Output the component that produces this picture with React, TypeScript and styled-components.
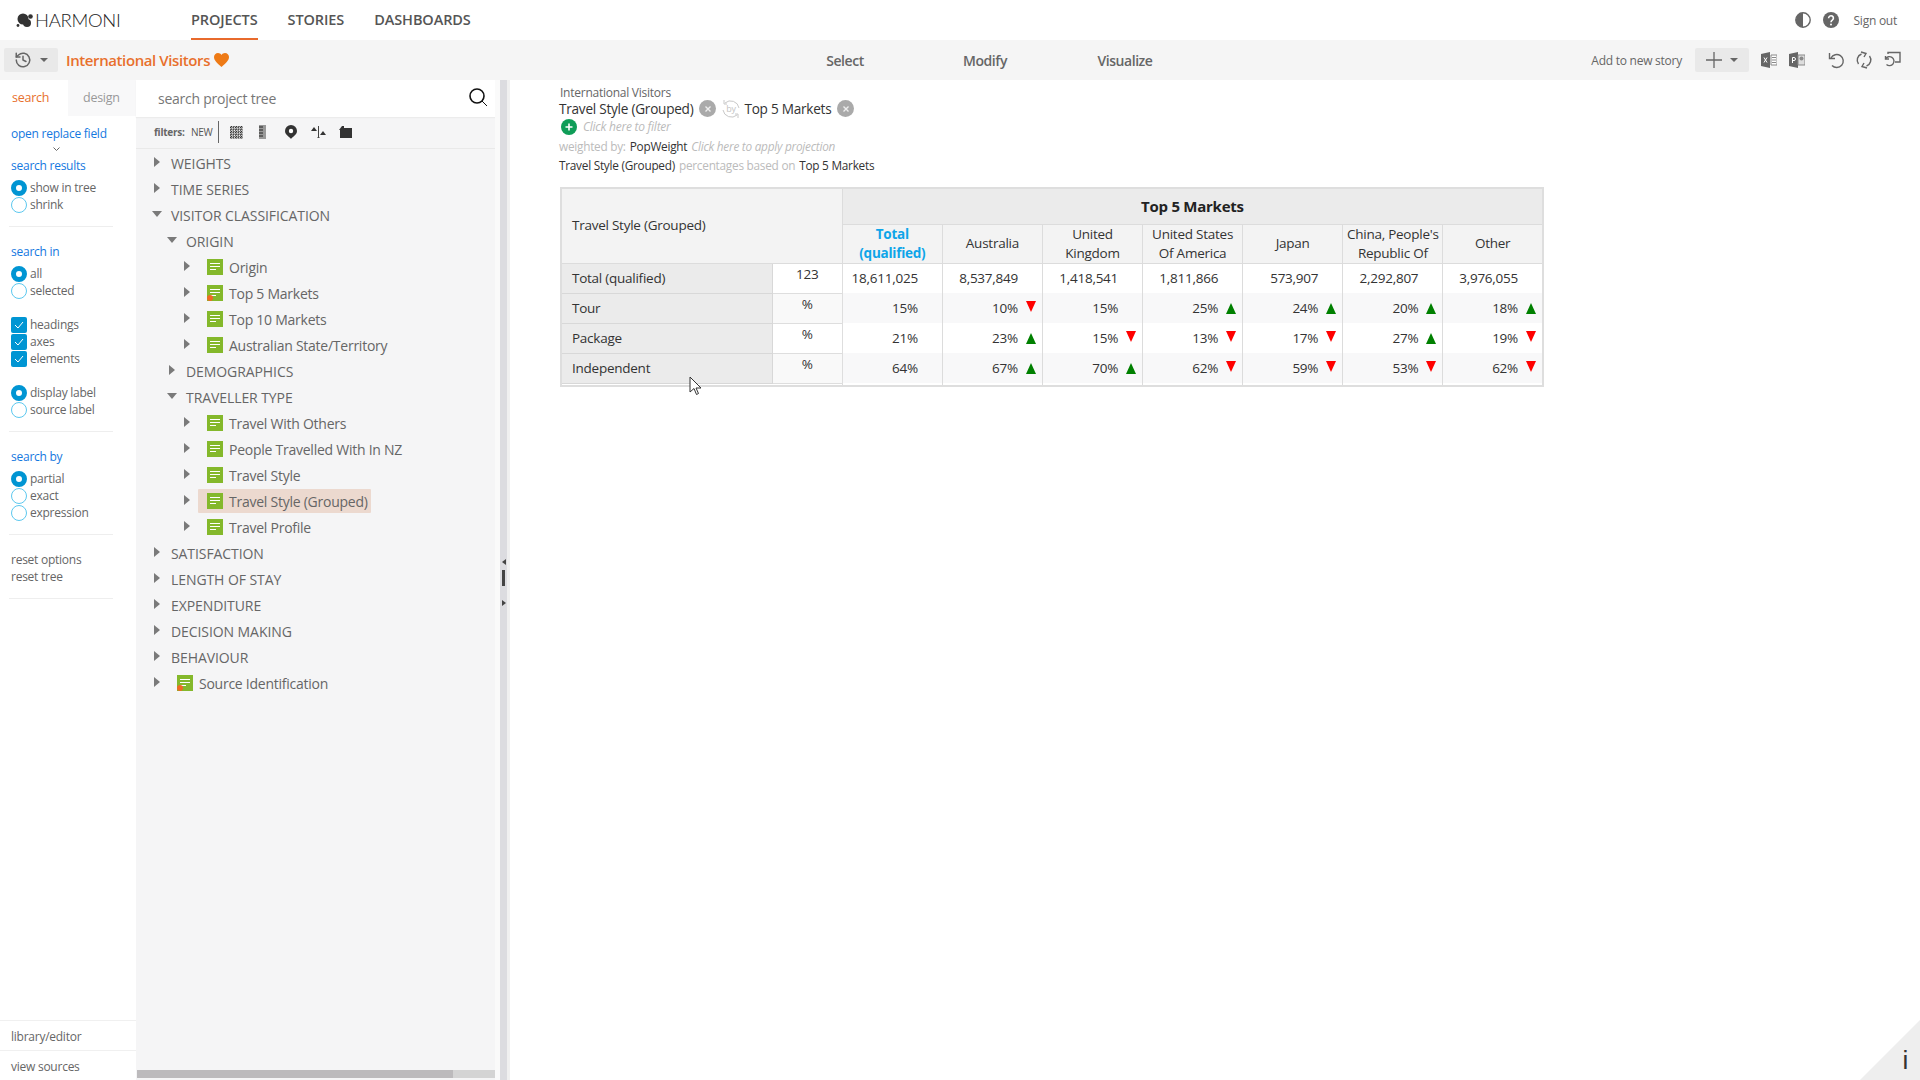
import React from "react";
import styled, { createGlobalStyle } from "styled-components";

const Global = createGlobalStyle`
  html, body { margin: 0; padding: 0; background: #fff; }
  body { font-family: "Open Sans", "Noto Sans", sans-serif; color: #333; letter-spacing: -0.25px; }
  * { box-sizing: border-box; }
`;

const Page = styled.div`
  position: relative;
  width: 1920px;
  height: 1080px;
  overflow: hidden;
  display: flex;
  flex-direction: column;
`;

/* header */
const Header = styled.header`
  height: 40px;
  display: flex;
  align-items: stretch;
  padding-left: 16px;
  padding-right: 23px;
  background: #fff;
`;
const Logo = styled.div`
  width: 175px;
  display: flex;
  align-items: center;
  gap: 2px;
`;
const LogoText = styled.span`
  font-family: Lato, sans-serif;
  font-weight: 300;
  font-size: 18.5px;
  letter-spacing: -0.3px;
  color: #222;
`;
const Nav = styled.nav`
  display: flex;
  gap: 30px;
`;
const NavItem = styled.a<{ $active?: boolean }>`
  display: flex;
  align-items: center;
  height: 40px;
  font-size: 14.5px;
  font-weight: 600;
  letter-spacing: -0.1px;
  color: #555;
  border-bottom: 2px solid ${(p) => (p.$active ? "#e86a2c" : "transparent")};
`;
const HeaderRight = styled.div`
  margin-left: auto;
  display: flex;
  align-items: center;
  gap: 12px;
`;
const SignOut = styled.span`
  font-size: 12px;
  color: #666;
  margin-left: 3px;
`;

/* toolbar */
const Toolbar = styled.div`
  height: 40px;
  display: grid;
  grid-template-columns: 811px 340px 1fr;
  align-items: center;
  background: #f5f5f5;
  padding: 0 19px 0 4px;
`;
const ToolLeft = styled.div`
  display: flex;
  align-items: center;
  gap: 8px;
`;
const DropButton = styled.div<{ $w: number }>`
  width: ${(p) => p.$w}px;
  height: 24px;
  border-radius: 2px;
  background: #e9e9e9;
  display: flex;
  align-items: center;
  justify-content: center;
  gap: 8px;
`;
const Caret = styled.span`
  width: 0;
  height: 0;
  border-left: 4px solid transparent;
  border-right: 4px solid transparent;
  border-top: 4px solid #666;
`;
const Title = styled.span`
  font-size: 15px;
  font-weight: 600;
  letter-spacing: -0.4px;
  color: #e8702c;
  display: flex;
  align-items: center;
  gap: 4px;
`;
const ToolTabs = styled.div`
  display: flex;
  justify-content: space-between;
`;
const ToolTab = styled.span`
  width: 60px;
  text-align: center;
  font-size: 14px;
  font-weight: 600;
  letter-spacing: -0.45px;
  color: #666;
`;
const ToolRight = styled.div`
  display: flex;
  align-items: center;
  justify-content: flex-end;
`;
const AddLabel = styled.span`
  font-size: 12px;
  color: #666;
  margin-right: 13px;
`;
const IconGroup = styled.div<{ $gap: number; $ml: number }>`
  display: flex;
  align-items: center;
  gap: ${(p) => p.$gap}px;
  margin-left: ${(p) => p.$ml}px;
`;

/* body */
const Body = styled.div`
  flex: 1;
  display: flex;
  min-height: 0;
`;
const LeftNav = styled.aside`
  width: 136px;
  display: flex;
  flex-direction: column;
  background: #fff;
`;
const Tabs = styled.div`
  height: 36px;
  display: flex;
`;
const Tab = styled.div<{ $active?: boolean }>`
  width: 68px;
  font-size: 12.5px;
  line-height: 35px;
  padding-left: ${(p) => (p.$active ? 12 : 15)}px;
  color: ${(p) => (p.$active ? "#e8702c" : "#999")};
  background: ${(p) => (p.$active ? "#fff" : "#f8f8f9")};
`;
const Options = styled.div`
  flex: 1;
  padding: 9px 23px 0 11px;
`;
const Section = styled.section`
  border-bottom: 1px solid #eee;
  margin-left: -2px;
  padding: 0 0 13px 2px;
  margin-bottom: 16px;
`;
const BlueLink = styled.div`
  font-size: 12px;
  line-height: 17px;
  color: #1478e0;
`;
const BlueHead = styled(BlueLink)`
  margin-bottom: 5px;
`;
const Chevron = styled.div`
  height: 15px;
  padding-left: 42px;
  display: flex;
  align-items: center;
`;
const OptionRow = styled.label`
  height: 17px;
  display: flex;
  align-items: center;
  gap: 3px;
  font-size: 12px;
  color: #666;
  white-space: nowrap;
`;
const Radio = styled.span<{ $on?: boolean }>`
  width: 16px;
  height: 16px;
  flex: none;
  border-radius: 50%;
  background: #fff;
  border: ${(p) => (p.$on ? "5px solid #0095d3" : "1px solid #5cc8ef")};
`;
const Check = styled.span`
  width: 16px;
  height: 16px;
  flex: none;
  border-radius: 2px;
  background: #0095d3;
  display: flex;
  align-items: center;
  justify-content: center;
`;
const Gap = styled.div<{ $h: number }>`
  height: ${(p) => p.$h}px;
`;
const GreyLink = styled.div`
  font-size: 12px;
  line-height: 17px;
  color: #666;
`;
const FootLink = styled.div`
  height: 30px;
  border-top: 1px solid #f0f0f0;
  padding: 1px 0 0 11px;
  font-size: 12px;
  line-height: 30px;
  color: #666;
`;
const TreePanel = styled.div`
  position: relative;
  width: 359px;
  background: #f5f5f6;
  display: flex;
  flex-direction: column;
`;
const SearchBox = styled.div`
  height: 37px;
  background: #fff;
  display: flex;
  align-items: center;
  justify-content: space-between;
  padding: 0 7px 0 22px;
  font-size: 14px;
  color: #777;
  box-shadow: 0 1px 1px #ececec;
`;
const SearchGlyph = styled.svg`
  margin-top: -4px;
`;
const FilterBar = styled.div`
  height: 32px;
  display: flex;
  align-items: center;
  padding: 0 0 1px 18px;
  border-bottom: 1px solid #e9e9e9;
  font-size: 10px;
`;
const FilterLabel = styled.b`
  font-weight: 700;
  color: #666;
  width: 37px;
`;
const FilterNew = styled.span`
  color: #555;
  width: 28px;
  height: 22px;
  line-height: 22px;
  border-right: 1px solid #666;
`;
const FilterIcons = styled.div`
  display: flex;
  align-items: center;
  margin-left: 11px;
`;
const FilterIcon = styled.span<{ $w: number }>`
  width: ${(p) => p.$w}px;
  display: flex;
`;
const Tree = styled.div`
  padding-top: 1px;
  flex: 1;
`;
const TreeRow = styled.div<{ $level: number }>`
  height: 26px;
  display: flex;
  align-items: center;
  padding-left: ${(p) => 18 + p.$level * 15}px;
  font-size: 14px;
  color: #666;
  white-space: nowrap;
`;
const GroupName = styled.span`
  letter-spacing: -0.08px;
`;
const ArrowSlot = styled.span<{ $w: number }>`
  width: ${(p) => p.$w}px;
  flex: none;
  display: flex;
  align-items: center;
`;
const ArrowRight = styled.span`
  width: 0;
  height: 0;
  border-top: 5px solid transparent;
  border-bottom: 5px solid transparent;
  border-left: 6px solid #7a7a7a;
  margin-top: -2px;
`;
const ArrowDown = styled.span`
  width: 0;
  height: 0;
  border-left: 5px solid transparent;
  border-right: 5px solid transparent;
  border-top: 6px solid #7a7a7a;
  margin-left: -2px;
  margin-top: -3px;
`;
const ItemLabel = styled.span<{ $sel?: boolean }>`
  height: 24px;
  display: flex;
  align-items: center;
  gap: 6px;
  padding: 0 3px 0 9px;
  background: ${(p) => (p.$sel ? "#ecd9cf" : "transparent")};
  border-radius: 1px;
`;
const HScroll = styled.div`
  height: 8px;
  margin: 0 0 2px 1px;
  background: #d4d4d4;
`;
const HThumb = styled.div`
  width: 316px;
  height: 100%;
  background: #bcbabc;
`;
const Splitter = styled.div`
  position: relative;
  width: 15px;
  background: linear-gradient(to right, #fafafa 0 5px, #dcdce0 5px 12px, #f0f0f0 12px 15px);
`;
const SplitBar = styled.span`
  position: absolute;
  left: 7px;
  top: 490px;
  width: 3px;
  height: 16px;
  background: #444;
`;
const SplitTop = styled.span`
  position: absolute;
  left: 7px;
  top: 479px;
  border-top: 3px solid transparent;
  border-bottom: 3px solid transparent;
  border-right: 4px solid #444;
`;
const SplitBottom = styled.span`
  position: absolute;
  left: 7px;
  top: 520px;
  border-top: 3px solid transparent;
  border-bottom: 3px solid transparent;
  border-left: 4px solid #444;
`;

/* main */
const Main = styled.main`
  flex: 1;
  padding: 5px 0 0 50px;
  background: #fff;
`;
const Crumb = styled.div`
  font-size: 12px;
  line-height: 15px;
  color: #666;
`;
const ChipRow = styled.div`
  height: 17px;
  margin-left: -1px;
  display: flex;
  align-items: center;
  font-size: 13.6px;
  color: #333;
`;
const ChipClose = styled.span<{ $ml: number }>`
  width: 17px;
  height: 17px;
  flex: none;
  margin-left: ${(p) => p.$ml}px;
  border-radius: 50%;
  background: #aaa;
  color: #eee;
  display: flex;
  align-items: center;
  justify-content: center;
`;
const ByBadge = styled.svg`
  flex: none;
  margin: 0 3px 0 5px;
`;
const ByText = styled.text`
  font-size: 9px;
  fill: #c4c4c4;
`;
const FilterRow = styled.div`
  height: 19px;
  display: flex;
  align-items: center;
  gap: 6px;
  margin-left: 1px;
  font-size: 12px;
  font-style: italic;
  color: #bbb;
`;
const Meta = styled.div`
  height: 19px;
  margin-left: -1px;
  display: flex;
  align-items: center;
  gap: 4px;
  font-size: 11.8px;
  color: #bbb;
`;
const MetaDark = styled.span`
  color: #333;
`;
const MetaItalic = styled.span`
  font-style: italic;
`;
const Pivot = styled.table`
  margin-top: 13px;
  table-layout: fixed;
  width: 984px;
  border-collapse: collapse;
  border: 2px solid #dedede;
  font-size: 13.5px;
  color: #333;
`;
const HeadCell = styled.th<{ $h: number; $dark?: boolean; $blue?: boolean; $big?: boolean; $left?: boolean }>`
  height: ${(p) => p.$h}px;
  padding: ${(p) => (p.$left ? "0 0 0 10px" : "0")};
  text-align: ${(p) => (p.$left ? "left" : "center")};
  font-weight: ${(p) => (p.$blue || p.$big ? 700 : 400)};
  font-size: ${(p) => (p.$big ? "15px" : "13.5px")};
  line-height: 19px;
  color: ${(p) => (p.$blue ? "#0ea5e9" : p.$big ? "#222" : "#333")};
  background: ${(p) => (p.$dark ? "#ebebeb" : "#f3f3f3")};
  border: 1px solid #dcdcdc;
`;
const RowLabel = styled.td`
  height: 30px;
  padding: 0 0 0 10px;
  background: #ebebeb;
  border: 1px solid #d8d8d8;
  border-left: 0;
`;
const UnitCell = styled.td<{ $alt?: boolean }>`
  padding: 0 0 8px;
  text-align: center;
  background: ${(p) => (p.$alt ? "#f9f9f9" : "#fff")};
  border: 1px solid #dedede;
`;
const DataCell = styled.td<{ $alt?: boolean }>`
  padding: 0;
  background: ${(p) => (p.$alt ? "#f8f8f9" : "#fff")};
  border-left: 1px solid #dcdcdc;
  border-right: 1px solid #dcdcdc;
`;
const CellInner = styled.div`
  display: flex;
  justify-content: flex-end;
  align-items: center;
`;
const ArrowBox = styled.span`
  width: 24px;
  flex: none;
  display: flex;
  justify-content: flex-end;
  padding-right: 6px;
`;
const Up = styled.span`
  border-left: 5px solid transparent;
  border-right: 5px solid transparent;
  border-bottom: 11px solid #008000;
`;
const Down = styled.span`
  border-left: 5px solid transparent;
  border-right: 5px solid transparent;
  border-top: 11px solid #ff0000;
  margin-top: -4px;
`;
const Spacer = styled.td`
  height: 3px;
  padding: 0;
  border-left: 1px solid #dcdcdc;
`;
const InfoCorner = styled.div`
  position: absolute;
  right: 0;
  bottom: 0;
  width: 60px;
  height: 60px;
  background: #eeeeee;
  clip-path: polygon(100% 0, 100% 100%, 0 100%);
`;
const InfoMark = styled.span`
  position: absolute;
  right: 12px;
  bottom: 7px;
  font-family: "Liberation Sans", sans-serif;
  font-size: 26px;
  line-height: 26px;
  color: #333;
`;
const Pointer = styled.svg`
  position: absolute;
  left: 689px;
  top: 376px;
`;

const DocIcon = ({ mark }: { mark?: boolean }) => (
  <svg width="16" height="16" viewBox="0 0 16 16">
    <rect width="16" height="16" fill="#84b82b" />
    <path d="M3 4h10v1H3zM3 7h10v1H3zM3 10h6v1H3z" fill="#fff" />
    {mark && <circle cx="3" cy="13" r="3" fill="#ef6a22" />}
  </svg>
);

const tree: { l: number; t: string; kind: "g" | "o" | "i" | "m" | "s" }[] = [
  { l: 0, t: "WEIGHTS", kind: "g" },
  { l: 0, t: "TIME SERIES", kind: "g" },
  { l: 0, t: "VISITOR CLASSIFICATION", kind: "o" },
  { l: 1, t: "ORIGIN", kind: "o" },
  { l: 2, t: "Origin", kind: "i" },
  { l: 2, t: "Top 5 Markets", kind: "m" },
  { l: 2, t: "Top 10 Markets", kind: "i" },
  { l: 2, t: "Australian State/Territory", kind: "i" },
  { l: 1, t: "DEMOGRAPHICS", kind: "g" },
  { l: 1, t: "TRAVELLER TYPE", kind: "o" },
  { l: 2, t: "Travel With Others", kind: "i" },
  { l: 2, t: "People Travelled With In NZ", kind: "i" },
  { l: 2, t: "Travel Style", kind: "i" },
  { l: 2, t: "Travel Style (Grouped)", kind: "s" },
  { l: 2, t: "Travel Profile", kind: "i" },
  { l: 0, t: "SATISFACTION", kind: "g" },
  { l: 0, t: "LENGTH OF STAY", kind: "g" },
  { l: 0, t: "EXPENDITURE", kind: "g" },
  { l: 0, t: "DECISION MAKING", kind: "g" },
  { l: 0, t: "BEHAVIOUR", kind: "g" },
  { l: 0, t: "Source Identification", kind: "m" },
];

const columns: string[][] = [["Australia"], ["United", "Kingdom"], ["United States", "Of America"], ["Japan"], ["China, People's", "Republic Of"], ["Other"]];
const totals = ["18,611,025", "8,537,849", "1,418,541", "1,811,866", "573,907", "2,292,807", "3,976,055"];
const rows: { name: string; cells: [string, "u" | "d" | ""][] }[] = [
  { name: "Tour", cells: [["15%", ""], ["10%", "d"], ["15%", ""], ["25%", "u"], ["24%", "u"], ["20%", "u"], ["18%", "u"]] },
  { name: "Package", cells: [["21%", ""], ["23%", "u"], ["15%", "d"], ["13%", "d"], ["17%", "d"], ["27%", "u"], ["19%", "d"]] },
  { name: "Independent", cells: [["64%", ""], ["67%", "u"], ["70%", "u"], ["62%", "d"], ["59%", "d"], ["53%", "d"], ["62%", "d"]] },
];

const CloseX = () => (
  <svg width="8" height="8" viewBox="0 0 8 8">
    <path d="M1.500 1.500l5 5M6.500 1.500l-5 5" stroke="#eee" strokeWidth="1.400" />
  </svg>
);
const Tick = () => (
  <svg width="10" height="8" viewBox="0 0 10 8">
    <path d="M1 4l3 3 5-6" stroke="#fff" strokeWidth="1" fill="none" />
  </svg>
);

const RadioOpt = ({ on, label }: { on?: boolean; label: string }) => (
  <OptionRow><Radio $on={on} />{label}</OptionRow>
);
const CheckOpt = ({ label }: { label: string }) => (
  <OptionRow><Check><Tick /></Check>{label}</OptionRow>
);

export default function App() {
  return (
    <Page>
      <Global />
      <Header>
        <Logo>
          <svg width="17" height="16" viewBox="0 0 17 16">
            <circle cx="7" cy="7" r="5.500" fill="#333" />
            <circle cx="11" cy="11" r="4" fill="#333" />
            <circle cx="14.500" cy="4.500" r="2.300" fill="#333" />
            <circle cx="2" cy="13.500" r="1.400" fill="#333" />
          </svg>
          <LogoText>HARMONI</LogoText>
        </Logo>
        <Nav>
          <NavItem $active>PROJECTS</NavItem>
          <NavItem>STORIES</NavItem>
          <NavItem>DASHBOARDS</NavItem>
        </Nav>
        <HeaderRight>
          <svg width="16" height="16" viewBox="0 0 16 16">
            <circle cx="8" cy="8" r="7.200" fill="#fff" stroke="#666" strokeWidth="1.400" />
            <path d="M8 .8a7.200 7.200 0 0 0 0 14.400z" fill="#666" />
          </svg>
          <svg width="16" height="16" viewBox="0 0 16 16">
            <circle cx="8" cy="8" r="8" fill="#666" />
            <path d="M5.600 6.200a2.400 2.400 0 1 1 3.700 2c-.9.600-1.300 1-1.300 2" stroke="#fff" strokeWidth="1.600" fill="none" />
            <circle cx="8" cy="12.400" r="1" fill="#fff" />
          </svg>
          <SignOut>Sign out</SignOut>
        </HeaderRight>
      </Header>

      <Toolbar>
        <ToolLeft>
          <DropButton $w={54}>
            <svg width="18" height="18" viewBox="0 0 24 24" fill="none" stroke="#666" strokeWidth="2" strokeLinecap="round" strokeLinejoin="round">
              <path d="M3 12a9 9 0 1 0 3-6.700L3 8" />
              <path d="M3 3v5h5" />
              <path d="M12 7v5l4 2" />
            </svg>
            <Caret />
          </DropButton>
          <Title>
            International Visitors
            <svg width="15" height="14" viewBox="0 0 15 14">
              <path d="M7.500 14C3 10 0 7.400 0 4.100 0 1.700 1.800 0 4 0c1.400 0 2.700.7 3.500 1.900C8.300.7 9.600 0 11 0c2.200 0 4 1.700 4 4.100C15 7.400 12 10 7.500 14z" fill="#ee7a16" />
            </svg>
          </Title>
        </ToolLeft>
        <ToolTabs>
          <ToolTab>Select</ToolTab>
          <ToolTab>Modify</ToolTab>
          <ToolTab>Visualize</ToolTab>
        </ToolTabs>
        <ToolRight>
          <AddLabel>Add to new story</AddLabel>
          <DropButton $w={54}>
            <svg width="16" height="16" viewBox="0 0 16 16">
              <path d="M8 0v16M0 8h16" stroke="#666" strokeWidth="1.300" />
            </svg>
            <Caret />
          </DropButton>
          <IconGroup $gap={12} $ml={12}>
            <svg width="16" height="16" viewBox="0 0 16 16">
              <path d="M0 2l9-2v16l-9-2z" fill="#666" />
              <path d="M10 3h6v10h-6z" fill="#fff" stroke="#888" />
              <path d="M11 5.500h4M11 8h4M11 10.500h4" stroke="#888" />
              <path d="M3 5.500l3 5M6 5.500l-3 5" stroke="#fff" />
            </svg>
            <svg width="16" height="16" viewBox="0 0 16 16">
              <path d="M0 2l9-2v16l-9-2z" fill="#666" />
              <path d="M9 3h7v10h-7z" fill="#ddd" stroke="#888" />
              <circle cx="12.500" cy="6.500" r="2" fill="#888" />
              <path d="M3.500 11V5.500h1.500a1.500 1.500 0 0 1 0 3h-1.500" stroke="#fff" fill="none" />
            </svg>
          </IconGroup>
          <IconGroup $gap={10} $ml={22}>
            <svg width="18" height="18" viewBox="0 0 18 18" fill="none" stroke="#666" strokeWidth="1.400">
              <path d="M4 7a6.500 6.500 0 1 1 1 7.500" />
              <path d="M2.500 2v5.500H8" />
            </svg>
            <svg width="18" height="18" viewBox="0 0 18 18" fill="none" stroke="#666" strokeWidth="1.400">
              <path d="M3.500 13a6.500 6.500 0 0 1 3-10" />
              <path d="M14.500 5a6.500 6.500 0 0 1-3 10" />
              <path d="M6 1l5 1.500-2 3.500M12 17l-5-1.500 2-3.500" />
            </svg>
            <svg width="18" height="18" viewBox="0 0 18 18" fill="none" stroke="#666" strokeWidth="1.400">
              <path d="M5 3V1.500h12V11h-5" />
              <path d="M2.500 5v3H6" />
              <path d="M2.500 8a4.500 4.500 0 1 1 1 5.500" />
            </svg>
          </IconGroup>
        </ToolRight>
      </Toolbar>

      <Body>
        <LeftNav>
          <Tabs>
            <Tab $active>search</Tab>
            <Tab>design</Tab>
          </Tabs>
          <Options>
            <BlueLink>open replace field</BlueLink>
            <Chevron>
              <svg width="7" height="5" viewBox="0 0 7 5">
                <path d="M.5.5l3 3 3-3" stroke="#666" fill="none" />
              </svg>
            </Chevron>
            <Section>
              <BlueHead>search results</BlueHead>
              <RadioOpt on label="show in tree" />
              <RadioOpt label="shrink" />
            </Section>
            <BlueHead>search in</BlueHead>
            <RadioOpt on label="all" />
            <RadioOpt label="selected" />
            <Gap $h={17} />
            <CheckOpt label="headings" />
            <CheckOpt label="axes" />
            <CheckOpt label="elements" />
            <Gap $h={17} />
            <Section>
              <RadioOpt on label="display label" />
              <RadioOpt label="source label" />
            </Section>
            <BlueHead>search by</BlueHead>
            <Section>
              <RadioOpt on label="partial" />
              <RadioOpt label="exact" />
              <RadioOpt label="expression" />
            </Section>
            <Section>
              <GreyLink>reset options</GreyLink>
              <GreyLink>reset tree</GreyLink>
            </Section>
          </Options>
          <FootLink>library/editor</FootLink>
          <FootLink>view sources</FootLink>
        </LeftNav>

        <TreePanel>
          <SearchBox>
            search project tree
            <SearchGlyph width="20" height="20" viewBox="0 0 20 20" fill="none" stroke="#111">
              <circle cx="9" cy="9" r="7" strokeWidth="1.600" />
              <path d="M14 14l5 5" strokeWidth="1" />
            </SearchGlyph>
          </SearchBox>
          <FilterBar>
            <FilterLabel>filters:</FilterLabel>
            <FilterNew>NEW</FilterNew>
            <FilterIcons>
              <FilterIcon $w={29}>
                <svg width="13" height="13" viewBox="0 0 13 13">
                  <path d="M0 1.500h13M0 4h13M0 6.500h13M0 9h13M0 11.500h13M1.500 0v13M4 0v13M6.500 0v13M9 0v13M11.500 0v13" stroke="#333" strokeWidth="1.300" strokeDasharray="1.300 1.200" />
                </svg>
              </FilterIcon>
              <FilterIcon $w={26}>
                <svg width="7" height="14" viewBox="0 0 7 14">
                  <rect width="7" height="14" fill="#999" />
                  <path d="M0 2h4M0 5h4M0 8h4M0 11h4" stroke="#222" />
                </svg>
              </FilterIcon>
              <FilterIcon $w={26}>
                <svg width="12" height="14" viewBox="0 0 12 14">
                  <path d="M6 14C5 12 0 10 0 6a6 6 0 1 1 12 0c0 4-5 6-6 8z" fill="#333" />
                  <circle cx="6" cy="6" r="2.200" fill="#fff" />
                </svg>
              </FilterIcon>
              <FilterIcon $w={28}>
                <svg width="15" height="12" viewBox="0 0 15 12">
                  <path d="M7.500 0v12M6 12h3" stroke="#444" />
                  <path d="M0 5l3-4 3 4zM9 9l3-4 3 4z" fill="#333" />
                </svg>
              </FilterIcon>
              <FilterIcon $w={13}>
                <svg width="13" height="12" viewBox="0 0 13 12">
                  <path d="M3 0h2v2h8v10H1V4H0z" fill="#333" />
                </svg>
              </FilterIcon>
            </FilterIcons>
          </FilterBar>
          <Tree>
            {tree.map((n) => {
              const isItem = n.kind === "i" || n.kind === "m" || n.kind === "s";
              return (
                <TreeRow key={n.t} $level={n.l}>
                  <ArrowSlot $w={isItem ? 14 : 17}>
                    {n.kind === "o" ? <ArrowDown /> : <ArrowRight />}
                  </ArrowSlot>
                  {isItem ? (
                    <ItemLabel $sel={n.kind === "s"}>
                      <DocIcon mark={n.kind === "m"} />
                      {n.t}
                    </ItemLabel>
                  ) : (
                    <GroupName>{n.t}</GroupName>
                  )}
                </TreeRow>
              );
            })}
          </Tree>
          <HScroll><HThumb /></HScroll>
        </TreePanel>
        <Splitter>
          <SplitTop />
          <SplitBar />
          <SplitBottom />
        </Splitter>

        <Main>
          <Crumb>International Visitors</Crumb>
          <ChipRow>
            Travel Style (Grouped)
            <ChipClose $ml={6}><CloseX /></ChipClose>
            <ByBadge width="20" height="20" viewBox="0 0 20 20" fill="none">
              <path d="M4 4a8.500 8.500 0 0 1 14 5M16 16a8.500 8.500 0 0 1-14-5M3 1v4h3M17 19v-4h-3" stroke="#c8c8c8" strokeWidth="1" />
              <ByText x="10" y="13" textAnchor="middle">by</ByText>
            </ByBadge>
            Top 5 Markets
            <ChipClose $ml={6}><CloseX /></ChipClose>
          </ChipRow>
          <FilterRow>
            <svg width="16" height="16" viewBox="0 0 16 16">
              <circle cx="8" cy="8" r="8" fill="#0f9d58" />
              <path d="M8 4.500v7M4.500 8h7" stroke="#fff" strokeWidth="1.600" />
            </svg>
            Click here to filter
          </FilterRow>
          <Meta>
            weighted by:
            <MetaDark>PopWeight</MetaDark>
            <MetaItalic>Click here to apply projection</MetaItalic>
          </Meta>
          <Meta>
            <MetaDark>Travel Style (Grouped)</MetaDark>
            percentages based on
            <MetaDark>Top 5 Markets</MetaDark>
          </Meta>
          <Pivot>
            <colgroup>
              <col width="211" />
              <col width="70" />
              <col width="100" />
              <col width="100" />
              <col width="100" />
              <col width="100" />
              <col width="100" />
              <col width="100" />
              <col width="100" />
            </colgroup>
            <thead>
              <tr>
                <HeadCell $h={36} $left rowSpan={2} colSpan={2}>Travel Style (Grouped)</HeadCell>
                <HeadCell $h={36} $dark $big colSpan={7}>Top 5 Markets</HeadCell>
              </tr>
              <tr>
                <HeadCell $h={39} $blue>Total<br />(qualified)</HeadCell>
                {columns.map((c) => (
                  <HeadCell $h={39} key={c[0]}>
                    {c.map((line, i) => (
                      <React.Fragment key={line}>{i > 0 && <br />}{line}</React.Fragment>
                    ))}
                  </HeadCell>
                ))}
              </tr>
            </thead>
            <tbody>
              <tr>
                <RowLabel>Total (qualified)</RowLabel>
                <UnitCell>123</UnitCell>
                {totals.map((t) => (
                  <DataCell key={t}><CellInner>{t}<ArrowBox /></CellInner></DataCell>
                ))}
              </tr>
              {rows.map((r, i) => (
                <tr key={r.name}>
                  <RowLabel>{r.name}</RowLabel>
                  <UnitCell $alt={i !== 1}>%</UnitCell>
                  {r.cells.map(([v, a], j) => (
                    <DataCell key={j} $alt={i !== 1}>
                      <CellInner>
                        {v}
                        <ArrowBox>
                          {a === "u" && <Up />}
                          {a === "d" && <Down />}
                        </ArrowBox>
                      </CellInner>
                    </DataCell>
                  ))}
                </tr>
              ))}
              <tr>
                <Spacer colSpan={2} />
                {totals.map((t) => (
                  <Spacer key={t} />
                ))}
              </tr>
            </tbody>
          </Pivot>
        </Main>
      </Body>

      <Pointer width="14" height="20" viewBox="0 0 14 20">
        <path d="M1 1v15l4-3.500 2.500 6 2-1-2.500-5.500H12z" fill="#fff" stroke="#333" strokeWidth="1" />
      </Pointer>
      <InfoCorner />
      <InfoMark>i</InfoMark>
    </Page>
  );
}
